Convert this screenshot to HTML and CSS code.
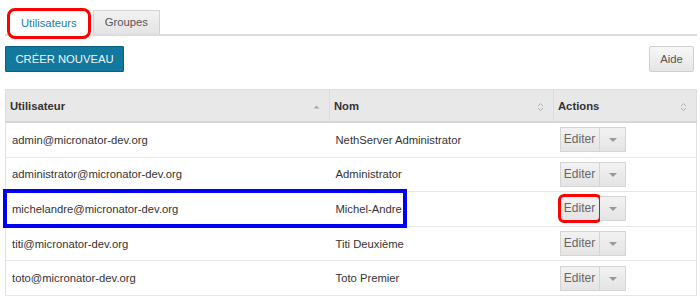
FILE: index.html
```html
<!DOCTYPE html>
<html lang="fr">
<head>
    <meta charset="UTF-8">
    <title>Utilisateurs</title>
    <link rel="stylesheet" href="styles.css">
</head>
<body>
    <div class="page">
        <ul class="tabs">
            <li class="tab active marked">Utilisateurs</li>
            <li class="tab">Groupes</li>
        </ul>

        <div class="toolbar">
            <button class="btn-primary">CRÉER NOUVEAU</button>
            <button class="btn-default">Aide</button>
        </div>

        <div class="table-wrap">
            <table class="users">
                <thead>
                    <tr>
                        <th class="col-user">Utilisateur
                            <svg class="sort" width="7" height="10" viewBox="0 0 7 10"><path d="M0.5 6.5 L3.5 3.5 L6.5 6.5 Z" fill="#a8a8a8"/></svg>
                        </th>
                        <th class="col-name">Nom
                            <svg class="sort" width="7" height="10" viewBox="0 0 7 10"><path d="M1 4 L3.5 1.5 L6 4 M1 6 L3.5 8.5 L6 6" fill="none" stroke="#b0b0b0" stroke-width="1"/></svg>
                        </th>
                        <th class="col-actions">Actions
                            <svg class="sort" width="7" height="10" viewBox="0 0 7 10"><path d="M1 4 L3.5 1.5 L6 4 M1 6 L3.5 8.5 L6 6" fill="none" stroke="#b0b0b0" stroke-width="1"/></svg>
                        </th>
                    </tr>
                </thead>
                <tbody>
                    <tr>
                        <td>admin@micronator-dev.org</td>
                        <td>NethServer Administrator</td>
                        <td><div class="split"><span class="edit">Editer</span><span class="caret"></span></div></td>
                    </tr>
                    <tr>
                        <td>administrator@micronator-dev.org</td>
                        <td>Administrator</td>
                        <td><div class="split"><span class="edit">Editer</span><span class="caret"></span></div></td>
                    </tr>
                    <tr>
                        <td>michelandre@micronator-dev.org</td>
                        <td>Michel-Andre</td>
                        <td><div class="split"><span class="edit marked">Editer</span><span class="caret"></span></div></td>
                    </tr>
                    <tr>
                        <td>titi@micronator-dev.org</td>
                        <td>Titi Deuxième</td>
                        <td><div class="split"><span class="edit">Editer</span><span class="caret"></span></div></td>
                    </tr>
                    <tr>
                        <td>toto@micronator-dev.org</td>
                        <td>Toto Premier</td>
                        <td><div class="split"><span class="edit">Editer</span><span class="caret"></span></div></td>
                    </tr>
                </tbody>
            </table>
            <!-- annotation box over the third row -->
            <div class="row-highlight"></div>
        </div>
    </div>
</body>
</html>
```

FILE: styles.css
```css
body { margin: 0; background: #fff; font-family: "Liberation Sans", Arial, sans-serif; font-size: 11.25px; color: #333; }
.page { padding: 0 3px 0 5px; }

/* Tabs */
.tabs { list-style: none; margin: 0; padding: 10px 0 0 5px; display: flex; align-items: flex-end; border-bottom: 2px solid #dcdcdc; height: 24px; }
.tab {
    height: 24px;
    line-height: 23px;
    padding: 0 11px;
    margin-right: 4px;
    color: #555;
    background: linear-gradient(#f2f2f2, #e4e4e4);
    border: 1px solid #d2d2d2;
    border-bottom: none;
    box-sizing: border-box;
}
.tab.active { background: #fff; color: #1a7aa6; border-color: #fff; height: 25px; margin-bottom: -2px; padding: 0 10px; margin-right: 5px; }
.marked { outline: 3px solid #f00; outline-offset: 0; border-radius: 5px; }

/* Toolbar */
.toolbar { display: flex; justify-content: space-between; margin: 10px 0 17px; padding-right: 3px; }
.btn-primary {
    font-family: inherit;
    font-size: 11.25px;
    color: #eef6fa;
    background: #13789e;
    border: 1px solid #0c5f80;
    border-radius: 1px;
    height: 26px;
    width: 119px;
    padding: 0;
}
.btn-default {
    font-family: inherit;
    font-size: 11.25px;
    color: #555;
    background: linear-gradient(#f7f7f7, #e5e5e5);
    border: 1px solid #cfcfcf;
    border-radius: 2px;
    height: 26px;
    width: 45px;
    padding: 0;
}

/* Table */
.table-wrap { position: relative; }
.users { border-collapse: collapse; width: 692px; table-layout: fixed; }
.users th, .users td { padding: 0 6px 0 6px; text-align: left; white-space: nowrap; }
.users th {
    height: 31px;
    background: #e8e8e8;
    font-weight: bold;
    border: 1px solid #dcdcdc;
    border-bottom: 2px solid #d6d6d6;
    position: relative;
    padding-left: 4px;
}
.users th + th { border-left: 1px solid #d6d6d6; }
.col-user { width: 313px; }
.col-name { width: 213px; }
.sort { position: absolute; right: 9px; top: 12px; }
.users td { height: 33.6px; border-bottom: 1px solid #e6e6e6; }
.users td:first-child { border-left: 1px solid #e2e2e2; }
.users td:last-child { border-right: 1px solid #e2e2e2; }

/* Split button */
.split { display: flex; height: 25px; width: 66px; }
.split .edit {
    width: 40px;
    box-sizing: border-box;
    font-size: 12px;
    line-height: 23px;
    text-align: center;
    color: #666;
    background: linear-gradient(#f2f2f2, #e4e4e4);
    border: 1px solid #d4d4d4;
}
.split .caret {
    width: 26px;
    box-sizing: border-box;
    background: linear-gradient(#f2f2f2, #e4e4e4);
    border: 1px solid #d4d4d4;
    border-left: none;
    position: relative;
}
.split .caret::after {
    content: "";
    position: absolute;
    left: 9px;
    top: 10px;
    border-left: 4px solid transparent;
    border-right: 4px solid transparent;
    border-top: 4px solid #999;
}
.split .edit.marked { border-radius: 4px; outline-offset: -1px; }

/* Annotation */
.row-highlight {
    position: absolute;
    left: -2px;
    top: 100px;
    width: 404px;
    height: 39px;
    border: 4px solid #0000f5;
    box-sizing: border-box;
}
```
